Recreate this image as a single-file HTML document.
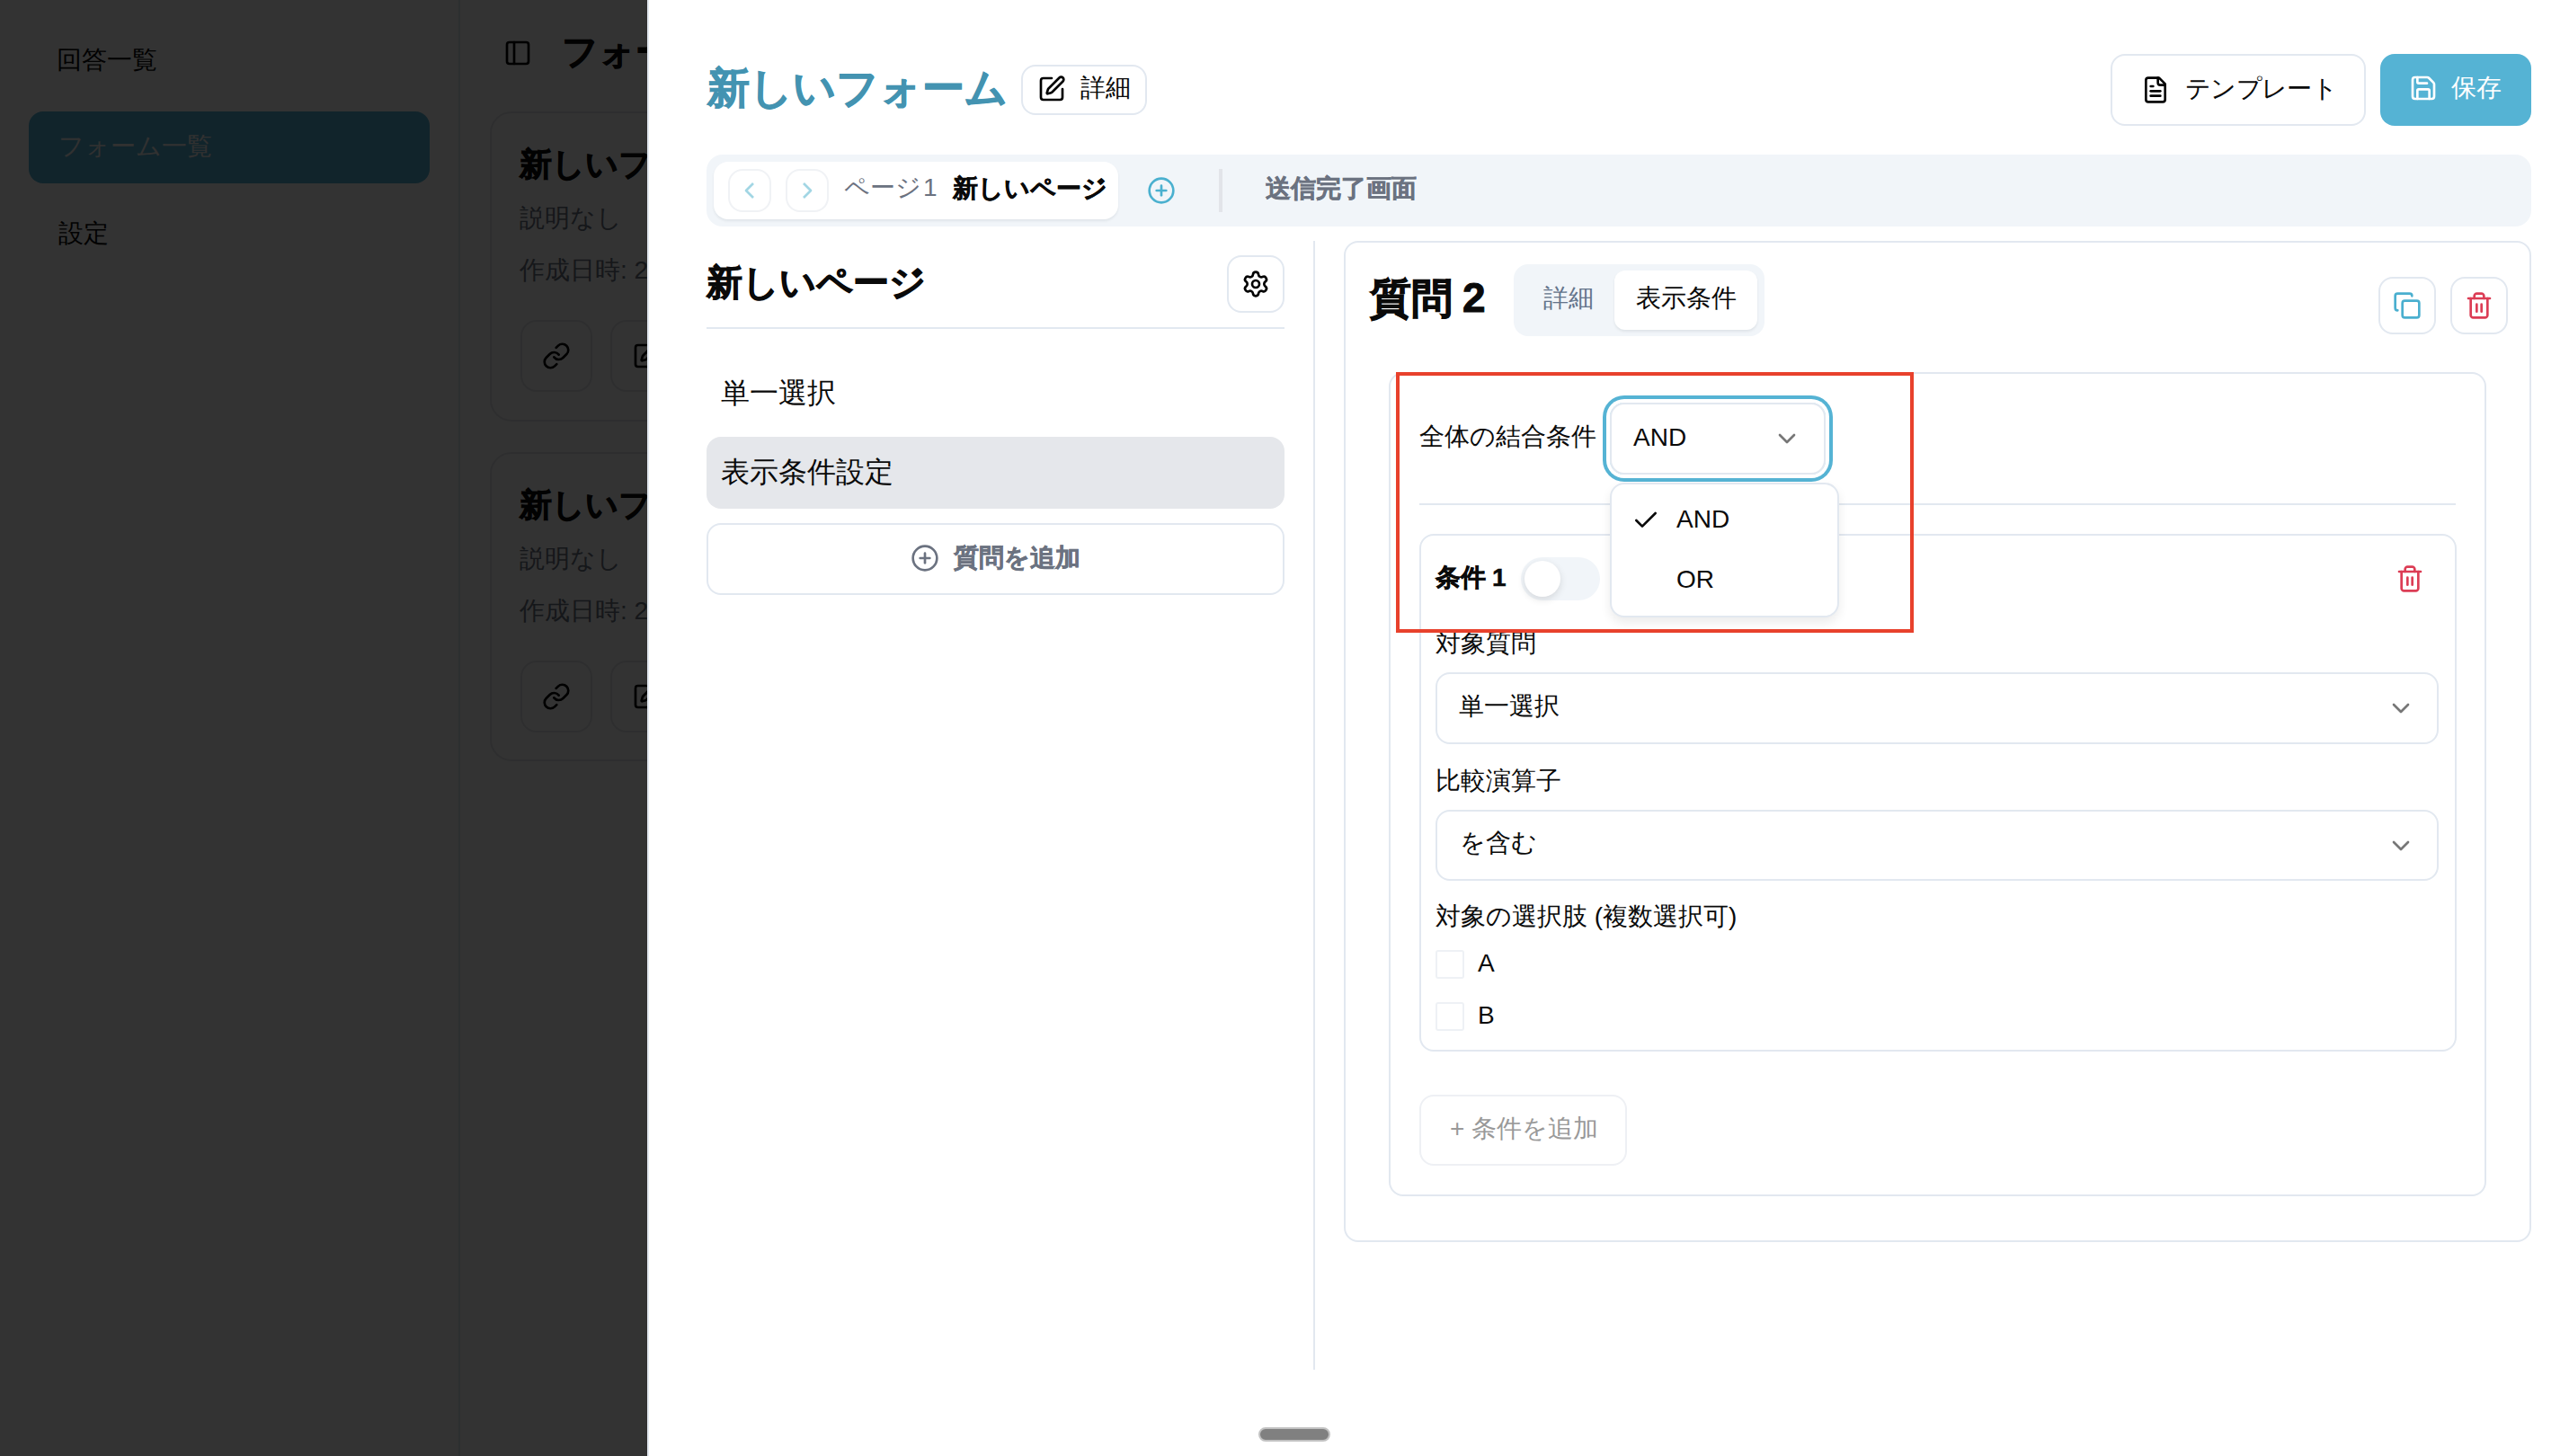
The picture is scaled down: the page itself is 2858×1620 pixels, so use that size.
<!DOCTYPE html>
<html lang="ja">
<head>
<meta charset="utf-8">
<style>
*{box-sizing:border-box;margin:0;padding:0}
html,body{width:2858px;height:1620px;overflow:hidden}
body{position:relative;background:#fff;font-family:"Liberation Sans",sans-serif;color:#0a0a0a}
.a{position:absolute}
.t{position:absolute;white-space:nowrap;line-height:60px;height:60px}
.b{font-weight:bold;-webkit-text-stroke:0.5px currentColor}
.s1{-webkit-text-stroke:1px currentColor}
.f28{font-size:28px}
.f32{font-size:32px}
.gray{color:#6b7280}
.bd{border:2px solid #e2e8f0}
svg.i{position:absolute;width:32px;height:32px;fill:none;stroke:currentColor;stroke-width:2;stroke-linecap:round;stroke-linejoin:round}
</style>
</head>
<body>
<!-- ============ BACKGROUND PAGE ============ -->
<div id="bg" class="a" style="left:0;top:0;width:720px;height:1620px;overflow:hidden;background:#fff">
  <div class="a" style="left:510px;top:0;width:2px;height:1620px;background:#e2e8f0"></div>
  <div class="t f28" style="left:63px;top:37px">回答一覧</div>
  <div class="a" style="left:32px;top:124px;width:446px;height:80px;border-radius:16px;background:#55b3d4"></div>
  <div class="t f28" style="left:65px;top:133px;color:#f4f4f4">フォーム一覧</div>
  <div class="t f28" style="left:65px;top:230px">設定</div>

  <svg class="i" viewBox="0 0 24 24" style="left:560px;top:43px;color:#000"><rect width="18" height="18" x="3" y="3" rx="2"/><path d="M9 3v18"/></svg>
  <div class="t b s1" style="left:625px;top:27px;font-size:40px">フォーム一覧</div>

  <div class="a bd" style="left:545px;top:124px;width:600px;height:345px;border-radius:24px;border-color:#e5e7eb"></div>
  <div class="t b s1" style="left:578px;top:153px;font-size:36px">新しいフォーム</div>
  <div class="t f28 gray" style="left:578px;top:213px">説明なし</div>
  <div class="t f28 gray" style="left:578px;top:271px">作成日時: 2025/01/01</div>
  <div class="a bd" style="left:579px;top:356px;width:80px;height:80px;border-radius:18px;border-color:#e5e7eb"></div>
  <svg class="i" viewBox="0 0 24 24" style="left:603px;top:380px;color:#000"><path d="M10 13a5 5 0 0 0 7.54.54l3-3a5 5 0 0 0-7.07-7.07l-1.72 1.71"/><path d="M14 11a5 5 0 0 0-7.54-.54l-3 3a5 5 0 0 0 7.07 7.07l1.71-1.71"/></svg>
  <div class="a bd" style="left:679px;top:356px;width:80px;height:80px;border-radius:18px;border-color:#e5e7eb"></div>
  <svg class="i" viewBox="0 0 24 24" style="left:703px;top:380px;color:#000"><path d="M12 3H5a2 2 0 0 0-2 2v14a2 2 0 0 0 2 2h14a2 2 0 0 0 2-2v-7"/><path d="M18.375 2.625a1 1 0 0 1 3 3l-9.013 9.014a2 2 0 0 1-.853.505l-2.873.84a.5.5 0 0 1-.62-.62l.84-2.873a2 2 0 0 1 .506-.852z"/></svg>

  <div class="a bd" style="left:545px;top:503px;width:600px;height:344px;border-radius:24px;border-color:#e5e7eb"></div>
  <div class="t b s1" style="left:578px;top:532px;font-size:36px">新しいフォーム</div>
  <div class="t f28 gray" style="left:578px;top:592px">説明なし</div>
  <div class="t f28 gray" style="left:578px;top:650px">作成日時: 2025/01/01</div>
  <div class="a bd" style="left:579px;top:735px;width:80px;height:80px;border-radius:18px;border-color:#e5e7eb"></div>
  <svg class="i" viewBox="0 0 24 24" style="left:603px;top:759px;color:#000"><path d="M10 13a5 5 0 0 0 7.54.54l3-3a5 5 0 0 0-7.07-7.07l-1.72 1.71"/><path d="M14 11a5 5 0 0 0-7.54-.54l-3 3a5 5 0 0 0 7.07 7.07l1.71-1.71"/></svg>
  <div class="a bd" style="left:679px;top:735px;width:80px;height:80px;border-radius:18px;border-color:#e5e7eb"></div>
  <svg class="i" viewBox="0 0 24 24" style="left:703px;top:759px;color:#000"><path d="M12 3H5a2 2 0 0 0-2 2v14a2 2 0 0 0 2 2h14a2 2 0 0 0 2-2v-7"/><path d="M18.375 2.625a1 1 0 0 1 3 3l-9.013 9.014a2 2 0 0 1-.853.505l-2.873.84a.5.5 0 0 1-.62-.62l.84-2.873a2 2 0 0 1 .506-.852z"/></svg>
  <div class="a" style="left:0;top:0;width:720px;height:1620px;background:rgba(0,0,0,0.8)"></div>
</div>

<!-- ============ SHEET PANEL ============ -->
<div id="panel" class="a" style="left:720px;top:0;width:2138px;height:1620px;background:#fff;border-left:2px solid #e2e8f0"></div>

<!-- header -->
<div class="t b s1" style="left:787px;top:68px;font-size:47px;color:#4393b1">新しいフォーム</div>
<div class="a bd" style="left:1136px;top:72px;width:140px;height:56px;border-radius:16px"></div>
<svg class="i" viewBox="0 0 24 24" style="left:1154px;top:83px;color:#000"><path d="M12 3H5a2 2 0 0 0-2 2v14a2 2 0 0 0 2 2h14a2 2 0 0 0 2-2v-7"/><path d="M18.375 2.625a1 1 0 0 1 3 3l-9.013 9.014a2 2 0 0 1-.853.505l-2.873.84a.5.5 0 0 1-.62-.62l.84-2.873a2 2 0 0 1 .506-.852z"/></svg>
<div class="t f28" style="left:1202px;top:68px">詳細</div>

<div class="a bd" style="left:2348px;top:60px;width:284px;height:80px;border-radius:16px"></div>
<svg class="i" viewBox="0 0 24 24" style="left:2382px;top:84px;color:#000"><path d="M15 2H6a2 2 0 0 0-2 2v16a2 2 0 0 0 2 2h12a2 2 0 0 0 2-2V7Z"/><path d="M14 2v4a2 2 0 0 0 2 2h4"/><path d="M10 9H8"/><path d="M16 13H8"/><path d="M16 17H8"/></svg>
<div class="t f28" style="left:2431px;top:69px;letter-spacing:-0.7px">テンプレート</div>
<div class="a" style="left:2648px;top:60px;width:168px;height:80px;border-radius:16px;background:#55b3d4"></div>
<svg class="i" viewBox="0 0 24 24" style="left:2680px;top:82px;color:#fff"><path d="M15.2 3a2 2 0 0 1 1.4.6l3.8 3.8a2 2 0 0 1 .6 1.4V19a2 2 0 0 1-2 2H5a2 2 0 0 1-2-2V5a2 2 0 0 1 2-2z"/><path d="M17 21v-7a1 1 0 0 0-1-1H8a1 1 0 0 0-1 1v7"/><path d="M7 3v4a1 1 0 0 0 1 1h7"/></svg>
<div class="t f28" style="left:2727px;top:68px;color:#fff">保存</div>

<!-- page tab bar -->
<div class="a" style="left:786px;top:172px;width:2030px;height:80px;border-radius:18px;background:#f1f5f9"></div>
<div class="a" style="left:794px;top:180px;width:450px;height:64px;border-radius:16px;background:#fff;box-shadow:0 2px 3px rgba(15,23,42,0.07)"></div>
<div class="a" style="left:810px;top:188px;width:48px;height:48px;border-radius:16px;border:2px solid #f0f2f5"></div>
<svg class="i" viewBox="0 0 24 24" style="left:818px;top:196px;color:#a2d6e4;stroke-linecap:butt"><path d="m15 18-6-6 6-6"/></svg>
<div class="a" style="left:874px;top:188px;width:48px;height:48px;border-radius:16px;border:2px solid #f0f2f5"></div>
<svg class="i" viewBox="0 0 24 24" style="left:882px;top:196px;color:#a2d6e4;stroke-linecap:butt"><path d="m9 18 6-6-6-6"/></svg>
<div class="t f28 gray" style="left:939px;top:179px">ページ</div><div class="t f28 gray" style="left:1027px;top:179px">1</div>
<div class="t f28 b" style="left:1060px;top:180px">新しいページ</div>
<svg class="i" viewBox="0 0 24 24" style="left:1276px;top:196px;color:#4ab0cf"><circle cx="12" cy="12" r="10"/><path d="M8 12h8"/><path d="M12 8v8"/></svg>
<div class="a" style="left:1356px;top:188px;width:4px;height:48px;background:#e2e4e9"></div>
<div class="t f28 b gray" style="left:1408px;top:180px">送信完了画面</div>

<!-- left column -->
<div class="t b s1" style="left:786px;top:284px;font-size:40px">新しいページ</div>
<div class="a bd" style="left:1365px;top:284px;width:64px;height:64px;border-radius:16px"></div>
<svg class="i" viewBox="0 0 24 24" style="left:1381px;top:300px;color:#000"><path d="M9.671 4.136a2.34 2.34 0 0 1 4.659 0 2.34 2.34 0 0 0 3.319 1.915 2.34 2.34 0 0 1 2.33 4.033 2.34 2.34 0 0 0 0 3.831 2.34 2.34 0 0 1-2.33 4.033 2.34 2.34 0 0 0-3.319 1.915 2.34 2.34 0 0 1-4.659 0 2.34 2.34 0 0 0-3.32-1.915 2.34 2.34 0 0 1-2.33-4.033 2.34 2.34 0 0 0 0-3.831A2.34 2.34 0 0 1 6.35 6.051a2.34 2.34 0 0 0 3.319-1.915"/><circle cx="12" cy="12" r="3"/></svg>
<div class="a" style="left:786px;top:364px;width:643px;height:2px;background:#e2e8f0"></div>
<div class="t f32" style="left:802px;top:407px">単一選択</div>
<div class="a" style="left:786px;top:486px;width:643px;height:80px;border-radius:16px;background:#e5e7eb"></div>
<div class="t f32" style="left:802px;top:495px">表示条件設定</div>
<div class="a bd" style="left:786px;top:582px;width:643px;height:80px;border-radius:16px"></div>
<svg class="i" viewBox="0 0 24 24" style="left:1013px;top:605px;color:#6b7280"><circle cx="12" cy="12" r="10"/><path d="M8 12h8"/><path d="M12 8v8"/></svg>
<div class="t f28 b gray" style="left:1061px;top:591px">質問を追加</div>
<div class="a" style="left:1461px;top:268px;width:2px;height:1256px;background:#e2e8f0"></div>

<!-- right card -->
<div class="a bd" style="left:1495px;top:268px;width:1321px;height:1114px;border-radius:16px"></div>
<div class="t b s1" style="left:1524px;top:302px;font-size:46px">質問</div><div class="t b s1" style="left:1627px;top:301px;font-size:46px">2</div>
<div class="a" style="left:1684px;top:294px;width:279px;height:80px;border-radius:16px;background:#f1f5f9"></div>
<div class="a" style="left:1796px;top:301px;width:159px;height:66px;border-radius:12px;background:#fff;box-shadow:0 2px 3px rgba(15,23,42,0.08)"></div>
<div class="t f28" style="left:1717px;top:302px;color:#64748b">詳細</div>
<div class="t f28" style="left:1820px;top:302px">表示条件</div>
<div class="a bd" style="left:2646px;top:308px;width:64px;height:64px;border-radius:16px"></div>
<svg class="i" viewBox="0 0 24 24" style="left:2662px;top:324px;color:#4aafcf"><rect width="14" height="14" x="8" y="8" rx="2" ry="2"/><path d="M4 16c-1.1 0-2-.9-2-2V4c0-1.1.9-2 2-2h10c1.1 0 2 .9 2 2"/></svg>
<div class="a bd" style="left:2726px;top:308px;width:64px;height:64px;border-radius:16px"></div>
<svg class="i" viewBox="0 0 24 24" style="left:2742px;top:324px;color:#dc3d55"><path d="M3 6h18"/><path d="M19 6v14c0 1-1 2-2 2H7c-1 0-2-1-2-2V6"/><path d="M8 6V4c0-1 1-2 2-2h4c1 0 2 1 2 2v2"/><line x1="10" x2="10" y1="11" y2="17"/><line x1="14" x2="14" y1="11" y2="17"/></svg>

<!-- inner conditions box -->
<div class="a bd" style="left:1545px;top:414px;width:1221px;height:917px;border-radius:16px"></div>
<div class="t f28" style="left:1579px;top:456px">全体の結合条件</div>
<div class="a" style="left:1791px;top:448px;width:240px;height:80px;border-radius:16px;border:2px solid #e2e8f0;box-shadow:0 0 0 4px #fff,0 0 0 8px #55b3d4"></div>
<div class="t f28" style="left:1817px;top:457px">AND</div>
<svg class="i" viewBox="0 0 24 24" style="left:1972px;top:472px;color:#777"><path d="m6 9 6 6 6-6"/></svg>
<div class="a" style="left:1579px;top:560px;width:1153px;height:2px;background:#e2e8f0"></div>

<!-- condition card -->
<div class="a bd" style="left:1579px;top:594px;width:1154px;height:576px;border-radius:16px"></div>
<div class="t f28 b" style="left:1597px;top:613px">条件</div><div class="t f28 b" style="left:1660px;top:613px">1</div>
<div class="a" style="left:1692px;top:620px;width:88px;height:48px;border-radius:24px;background:#f1f5f9"></div>
<div class="a" style="left:1696px;top:624px;width:40px;height:40px;border-radius:20px;background:#fff;box-shadow:0 3px 8px rgba(0,0,0,0.12)"></div>
<svg class="i" viewBox="0 0 24 24" style="left:2665px;top:628px;color:#dc3d55"><path d="M3 6h18"/><path d="M19 6v14c0 1-1 2-2 2H7c-1 0-2-1-2-2V6"/><path d="M8 6V4c0-1 1-2 2-2h4c1 0 2 1 2 2v2"/><line x1="10" x2="10" y1="11" y2="17"/><line x1="14" x2="14" y1="11" y2="17"/></svg>
<div class="t f28" style="left:1597px;top:686px">対象質問</div>
<div class="a bd" style="left:1597px;top:748px;width:1116px;height:80px;border-radius:16px"></div>
<div class="t f28" style="left:1623px;top:756px">単一選択</div>
<svg class="i" viewBox="0 0 24 24" style="left:2655px;top:772px;color:#777"><path d="m6 9 6 6 6-6"/></svg>
<div class="t f28" style="left:1597px;top:839px">比較演算子</div>
<div class="a bd" style="left:1597px;top:901px;width:1116px;height:79px;border-radius:16px"></div>
<div class="t f28" style="left:1624px;top:908px">を含む</div>
<svg class="i" viewBox="0 0 24 24" style="left:2655px;top:925px;color:#777"><path d="m6 9 6 6 6-6"/></svg>
<div class="t f28" style="left:1597px;top:990px">対象の選択肢 (複数選択可)</div>
<div class="a" style="left:1597px;top:1057px;width:32px;height:32px;border:2px solid #eef1f5;border-radius:3px"></div>
<div class="t f28" style="left:1644px;top:1042px">A</div>
<div class="a" style="left:1597px;top:1115px;width:32px;height:32px;border:2px solid #eef1f5;border-radius:3px"></div>
<div class="t f28" style="left:1644px;top:1100px">B</div>

<div class="a" style="left:1579px;top:1218px;width:231px;height:79px;border-radius:16px;border:2px solid #eef0f4"></div>
<div class="t f28" style="left:1613px;top:1226px;color:#999">+ 条件を追加</div>

<!-- dropdown menu -->
<div class="a" style="left:1791px;top:537px;width:255px;height:150px;border-radius:16px;background:#fff;border:2px solid #e2e8f0;box-shadow:0 6px 12px rgba(0,0,0,0.08)"></div>
<svg class="i" viewBox="0 0 24 24" style="left:1815px;top:563px;color:#0a0a0a"><path d="M20 6 9 17l-5-5"/></svg>
<div class="t f28" style="left:1865px;top:548px">AND</div>
<div class="t f28" style="left:1865px;top:615px">OR</div>

<!-- red highlight -->
<div class="a" style="left:1553px;top:414px;width:576px;height:290px;border:4px solid #e8412c"></div>

<!-- scrollbar -->
<div class="a" style="left:1400px;top:1588px;width:80px;height:16px;border-radius:8px;background:#808080;border:2px solid #c2c2c2"></div>

</body>
</html>
